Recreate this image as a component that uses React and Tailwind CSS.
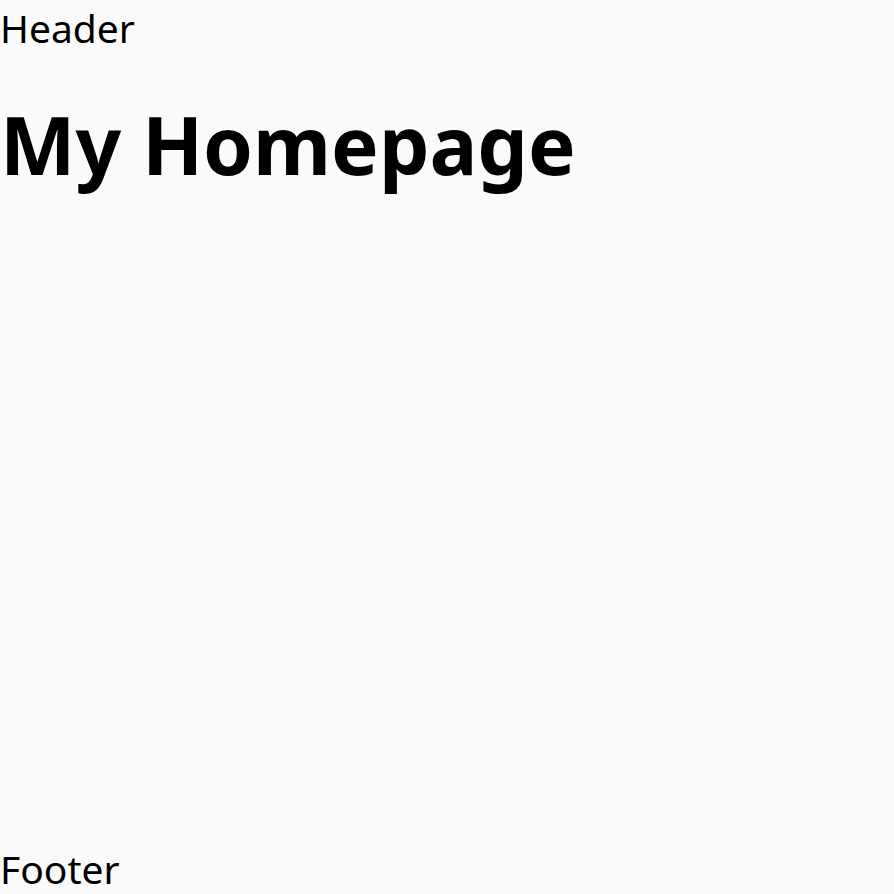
export default function App() {
  return (
    <div
      className="min-h-screen flex flex-col bg-[#fafafa] text-black"
      style={{ fontFamily: '"Noto Sans", "Open Sans", sans-serif' }}
    >
      <header className="text-[39px] leading-[56px]">Header</header>
      <main className="flex-1">
        <h1 className="text-[80px] font-bold leading-[100px] mt-[38px]">My Homepage</h1>
      </main>
      <footer className="text-[39px] leading-[50px]">Footer</footer>
    </div>
  );
}
